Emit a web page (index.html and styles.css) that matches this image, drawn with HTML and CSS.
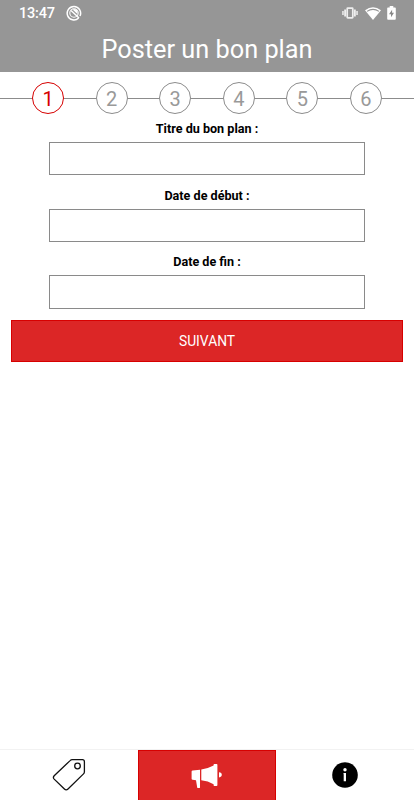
FILE: index.html
```html
<!DOCTYPE html>
<html lang="fr">
<head>
<meta charset="utf-8">
<title>Poster un bon plan</title>
<link rel="stylesheet" href="styles.css">
</head>
<body>
<div class="app">
  <header class="header">
    <div class="status">
      <span class="time">13:47</span>
      <svg class="app-icon" width="16" height="16" viewBox="0 0 16 16" fill="none" stroke="#fff"><path d="M12.6 13A6.7 6.7 0 1 1 14 11" stroke-width="1.5"/><circle cx="8" cy="8" r="4.2" stroke-width="1.1"/><path d="M5 5.5l8 7.5" stroke-width="1.5"/><path d="M6.5 4.5l5 4.5V5.5L9 4z" fill="#fff" stroke="none"/></svg>
      <svg class="vibrate" width="16" height="12" viewBox="0 0 16 12"><path d="M.2 4h1.5v4H.2zM2.2 2.5h1.8v7H2.2zM12 2.5h1.8v7H12zM14.3 4h1.5v4h-1.5z" fill="#eee"/><rect x="5.2" y="1.2" width="5.6" height="9.6" rx=".6" fill="none" stroke="#eee" stroke-width="1.7"/></svg>
      <svg class="wifi" width="16" height="13" viewBox="0 0 16 13"><path d="M0 3.2Q8-2.8 16 3.2L8 13z" fill="#fff"/><path d="M2 4.4Q8 .4 14 4.4" fill="none" stroke="#969696" stroke-width="1.1"/></svg>
      <svg class="battery" width="9" height="14" viewBox="0 0 9 14"><path d="M2.7 0h3.6v1.4H8q.8 0 .8.8v10.6q0 .9-.8.9H1q-.8 0-.8-.9V2.2q0-.8.8-.8h1.7z" fill="#fff"/><path d="M5.1 3.8L2 8.2h2v3l3-4.4H5.1z" fill="#888"/></svg>
    </div>
    <h1 class="title">Poster un bon plan</h1>
  </header>
  <main>
    <ol class="steps">
      <li class="step active">1</li><li class="step">2</li><li class="step">3</li><li class="step">4</li><li class="step">5</li><li class="step">6</li>
    </ol>
    <form class="form">
      <label class="field"><span class="label">Titre du bon plan :</span><input class="input" type="text"></label>
      <label class="field"><span class="label">Date de début :</span><input class="input" type="text"></label>
      <label class="field"><span class="label">Date de fin :</span><input class="input" type="text"></label>
      <button class="next" type="button">SUIVANT</button>
    </form>
  </main>
  <nav class="tabs">
    <a class="tab"><svg width="34" height="34" viewBox="0 0 34 34" fill="none" stroke="#111" stroke-width="1.3"><path d="M20.2 1.7h10.2q2 0 2 2v10.1q0 1.2-.9 2.1L16 31q-1.8 1.8-3.6 0L2.2 21.1q-1.6-1.7 0-3.4L18.1 2.6q.9-.9 2.1-.9z"/><circle cx="25.5" cy="8" r="2.8"/></svg></a>
    <a class="tab selected"><svg width="32" height="26" viewBox="0 0 32 26" fill="#fff"><path d="M1.6 7.6L9 6.7V24.6q0 .4-.4.4H7q-.6 0-.8-.6L5 17.2l-3.4-.4Q.6 16.7.6 15.7V8.6q0-.9 1-1zM10.3 6.5Q17 5.7 22.6 2.6V1.8q0-.8.8-.8h2.2q.8 0 .8.8v20.3q0 .9-.8.9h-2.2q-.8 0-.8-.9v-.8Q17 18 10.3 17.3zM28 9.2q2.8.3 2.8 2.6T28 14.4z"/></svg></a>
    <a class="tab"><svg width="26" height="26" viewBox="0 0 26 26"><circle cx="13" cy="13" r="12.8"/><circle cx="13" cy="7.8" r="1.7" fill="#fff"/><path d="M11.5 11H14v8.3h-2.3v-7h-.2z" fill="#fff"/></svg></a>
  </nav>
</div>
</body>
</html>
```

FILE: styles.css
```css
* { box-sizing: border-box; }
body { margin: 0; background: #fff; font-family: Roboto, sans-serif; }
.app { display: flex; flex-direction: column; height: 800px; width: 414px; overflow: hidden; }
.header { height: 71.5px; background: #969696; color: #fff; }
.status { display: flex; align-items: center; height: 26px; padding: 0 18px 0 19px; }
.time { width: 47px; padding-top: 2px; font-size: 14.5px; font-weight: 500; line-height: 26px; letter-spacing: -.2px; }
.vibrate { margin-left: auto; }
.wifi { margin-left: 7px; }
.battery { margin-left: 6px; }
.title { margin: 0; font-size: 25.3px; font-weight: 400; line-height: 48px; text-align: center; white-space: nowrap; }
main { flex: 1; }
.steps { display: flex; justify-content: space-between; list-style: none; margin: 0; padding: 10.7px 32px 0; background: linear-gradient(#8c8c8c, #8c8c8c) 0 26px / 100% 1px no-repeat; }
.step { width: 32px; height: 32px; border: 1px solid #8c8c8c; border-radius: 50%; background: #fff; color: #999; font-size: 20px; font-weight: 400; line-height: 32px; text-align: center; }
.active { color: #d60000; border-color: #d60000; }
.form { padding: 5.8px 11px 0; }
.field { display: block; height: 66.6px; padding: 0 38px; text-align: center; }
.label { display: block; height: 22px; font-size: 12.6px; font-weight: 700; line-height: 17.6px; color: #000; }
.input { display: block; width: 316px; height: 33.5px; padding: 0 8px; border: 1px solid #8a8a8a; border-radius: 0; background: #fff; outline: 0; }
.next { display: block; width: 392px; height: 42px; padding: 0; border: 1px solid #d70000; background: #dc2626; color: #fff; font-family: inherit; font-size: 13.8px; line-height: 40px; text-align: center; }
.tabs { display: flex; height: 51px; border-top: 1px solid #f2f2f2; }
.tab { display: flex; flex: 0 0 138px; align-items: center; justify-content: center; }
.selected { background: #dc2626; border: 1px solid #d70000; border-bottom: 0; }
```
